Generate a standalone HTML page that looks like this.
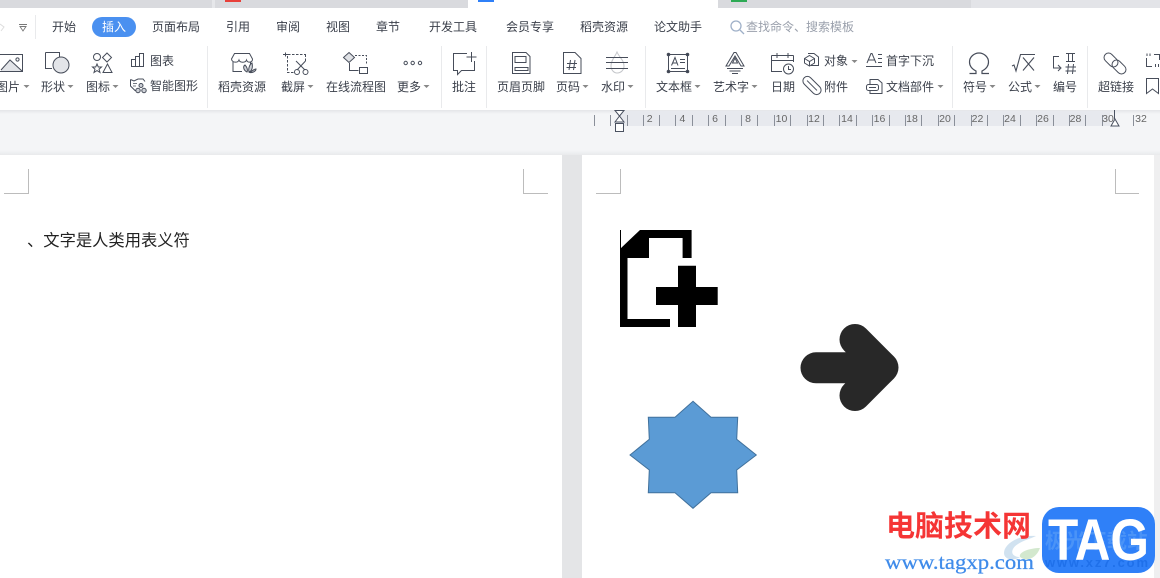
<!DOCTYPE html>
<html><head><meta charset="utf-8">
<style>
html,body{margin:0;padding:0}
body{position:relative;width:1160px;height:578px;overflow:hidden;background:#e4e5e7;font-family:"Liberation Sans","Noto Sans CJK SC",sans-serif}
.a{position:absolute}
.t{position:absolute;font-size:12px;line-height:16px;white-space:nowrap;color:#3a3f4a}
.m{top:19px}
.l{top:79px}
.u{top:53px}
</style></head><body>
<div class="a" style="left:0;top:0;width:1160px;height:8px;background:#d9dade"></div>
<div class="a" style="left:212px;top:0;width:3px;height:8px;background:#e6e7ea"></div>
<div class="a" style="left:971px;top:0;width:189px;height:8px;background:#e3e4e8"></div>
<div class="a" style="left:468px;top:0;width:250px;height:8px;background:#fff"></div>
<div class="a" style="left:225px;top:0;width:16px;height:2px;background:#e8403a"></div>
<div class="a" style="left:478px;top:0;width:16px;height:2px;background:#2f80f8"></div>
<div class="a" style="left:731px;top:0;width:16px;height:2px;background:#2eaa55"></div>
<div class="a" style="left:0;top:8px;width:1160px;height:102px;background:#fff"></div>
<div class="a" style="left:0;top:110px;width:1160px;height:45px;background:#f4f5f7"></div>
<div class="a" style="left:0;top:110px;width:1160px;height:4px;background:linear-gradient(#e4e5e8,#f4f5f7)"></div>
<div class="a" style="left:0;top:150px;width:1160px;height:5px;background:linear-gradient(#f4f5f7,#e9eaec)"></div>
<div class="a" style="left:620px;top:111px;width:490px;height:15px;background:#e7e9ee"></div>
<div class="a" style="left:0;top:155px;width:562px;height:423px;background:#fff"></div>
<div class="a" style="left:582px;top:155px;width:572px;height:423px;background:#fff"></div>
<div class="a" style="left:1154px;top:155px;width:6px;height:423px;background:#efeff0"></div>
<div class="a" style="left:92px;top:17px;width:44px;height:20px;border-radius:10px;background:#4a90f0"></div>
<span class="t m" style="left:52px">开始</span>
<span class="t m" style="left:102px;color:#fff">插入</span>
<span class="t m" style="left:152px">页面布局</span>
<span class="t m" style="left:226px">引用</span>
<span class="t m" style="left:276px">审阅</span>
<span class="t m" style="left:326px">视图</span>
<span class="t m" style="left:376px">章节</span>
<span class="t m" style="left:429px">开发工具</span>
<span class="t m" style="left:506px">会员专享</span>
<span class="t m" style="left:580px">稻壳资源</span>
<span class="t m" style="left:654px">论文助手</span>
<span class="t m" style="left:746px;color:#9aa0ac">查找命令、搜索模板</span>
<span class="t l" style="left:-4px">图片</span>
<span class="t l" style="left:41px">形状</span>
<span class="t l" style="left:86px">图标</span>
<span class="t u" style="left:150px">图表</span>
<span class="t" style="left:150px;top:78px">智能图形</span>
<span class="t l" style="left:218px">稻壳资源</span>
<span class="t l" style="left:281px">截屏</span>
<span class="t l" style="left:326px">在线流程图</span>
<span class="t l" style="left:397px">更多</span>
<span class="t l" style="left:452px">批注</span>
<span class="t l" style="left:497px">页眉页脚</span>
<span class="t l" style="left:556px">页码</span>
<span class="t l" style="left:601px">水印</span>
<span class="t l" style="left:656px">文本框</span>
<span class="t l" style="left:713px">艺术字</span>
<span class="t l" style="left:771px">日期</span>
<span class="t u" style="left:824px">对象</span>
<span class="t l" style="left:824px">附件</span>
<span class="t u" style="left:886px">首字下沉</span>
<span class="t l" style="left:886px">文档部件</span>
<span class="t l" style="left:963px">符号</span>
<span class="t l" style="left:1008px">公式</span>
<span class="t l" style="left:1053px">编号</span>
<span class="t l" style="left:1098px">超链接</span>

<svg class="a" style="left:0;top:0" width="1160" height="578" viewBox="0 0 1160 578">
<g stroke="#e9eaec" fill="none">
<path d="M35.5 15V39M207.5 46V108M441.5 46V108M486.5 46V108M645.5 46V108M952.5 46V108M1087.5 46V108"/>
</g>
<path d="M19 24.500H27M20 26.500H26L23 31Z" stroke="#777" fill="none" stroke-width=".9"/>
<path d="M0 24L4 27L1 31" stroke="#ddd" fill="none"/>
<circle cx="736" cy="26" r="5" fill="none" stroke="#9fb0c8" stroke-width="1.300"/><path d="M740 30L744 34" stroke="#9fb0c8" stroke-width="1.300"/>
<g fill="#888">
<path d="M23.500 85h6l-3 3zM67.500 85h6l-3 3zM112.500 85h6l-3 3zM307.500 85h6l-3 3zM423.500 85h6l-3 3zM582.500 85h6l-3 3zM627.500 85h6l-3 3zM694.500 85h6l-3 3zM751.500 85h6l-3 3zM851.500 60h6l-3 3zM937.500 85h6l-3 3zM989.500 85h6l-3 3zM1034.500 85h6l-3 3z"/>
</g>
<g fill="none" stroke="#474d5a" stroke-width="1">
<path d="M1 70L10 60L22 71H1Z" fill="#e2e4e8" stroke="none"/><path d="M0 54.500H22.500V71.500H0M1 70L10 60L22 71"/><circle cx="17.500" cy="59.500" r="1.600"/>
<path d="M45.500 52.500H59.500V59M52 68.500H45.500V52.500"/><circle cx="61" cy="65" r="8" fill="#e3e5e9"/>
<circle cx="97" cy="57" r="3.500"/><path d="M107 53L111.500 57.500L107 62L102.500 57.500Z"/><path d="M97 64L98.300 67H101.500L99 69.200L100 72.500L97 70.600L94 72.500L95 69.200L92.500 67H95.700Z"/><path d="M107.500 64L112 72.500H103Z"/>
<path d="M131.500 59.500H135.500V66.500H131.500ZM135.500 56.500H139.500V66.500H135.500ZM139.500 53.500H143.500V66.500H139.500Z"/>
<path d="M130.500 79.500L134 81L138 79L143 79L145 81.500M130.500 79.500V86L135 90.500H137"/><path d="M133 83.500H137M133 86H136" stroke-width=".8"/><circle cx="141" cy="85.500" r="2" fill="#cfd2d8"/><circle cx="138" cy="90.500" r="2.200" fill="#cfd2d8"/><circle cx="144" cy="90.500" r="2.200" fill="#cfd2d8"/>
<path d="M234.500 53.500H249.500L252.500 59C252.500 63 247.500 63 246.500 60C245.500 63 240 63 239 60C238 63 232 63 231.500 59Z"/><path d="M233 62V71.500H242M250.500 62V65"/><path d="M247 72C243 70 243 66 245 65C247 67 248 70 247 72ZM249 72C248 68 250 64 252 63C253 67 252 71 249 72ZM250 72.500C252 71 254 69 256 69C256 71 253 73 250 72.500Z" fill="#cfd2d8"/>
<path d="M288 54.500H306M287.500 56V72.500H295M305.500 54.500V62" stroke-dasharray="2.500 1.500"/><path d="M285.500 52.500V56.500M283 54.500H288"/><path d="M296 61L305 70M305.500 61L297 70"/><circle cx="297" cy="72" r="2.500"/><circle cx="305.500" cy="72" r="2.500"/>
<path d="M349 52.500L354.500 57.500L349 62.500L343.500 57.500Z" fill="#dfe1e5"/><path d="M355 55.500H366.500V65" stroke-dasharray="2 1.500"/><path d="M349.500 63V70.500H358.500"/><rect x="359.500" y="67.500" width="8" height="6"/>
<circle cx="405.700" cy="63" r="1.700"/><circle cx="412.700" cy="63" r="1.700"/><circle cx="420" cy="63" r="1.700"/>
<path d="M467 53.500H453.500V70.500H457.500V74.500L461.500 70.500H474.500V61"/><path d="M471.500 52V62M466.500 57H476.500"/>
<path d="M512.500 52.500H526L530 56.500V73.500H512.500Z"/><path d="M515 56.500H526V62.500H515ZM515 67.500H528V70.500H515Z"/>
<path d="M563.500 52.500H575L581 58.500V73.500H563.500Z"/><path d="M570.500 60L569 70M575 60L573.500 70M567 63.500H577M566.500 67.500H576"/>
<path d="M617 52C615 57 611 60 611 66C611 70 614 73 617 73C621 73 624 70 624 66C624 60 619 57 617 52Z" stroke="#c4c6ca"/><path d="M606 57.500H628M606 62.500H628M606 68.500H628"/>
<rect x="668.500" y="54.500" width="19" height="17"/><circle cx="668.500" cy="54.500" r="1.300" fill="#3d4350"/><circle cx="687.500" cy="54.500" r="1.300" fill="#3d4350"/><circle cx="668.500" cy="71.500" r="1.300" fill="#3d4350"/><circle cx="687.500" cy="71.500" r="1.300" fill="#3d4350"/><path d="M671.500 65.500L675 57.500L678 65.500M672.500 63H677M680 59.500H685M680 62.500H685M671 68.500H685"/>
<path d="M726 66L734 52.500H736L744 66H741L735 56L729 66Z"/><path d="M732.500 63L735 58L737.500 63ZM727 68.500H743M729.500 71H740.500M732 73.500H738"/>
<path d="M771.500 55.500H793.500M771.500 55.500V71.500H782M793.500 55.500V62M771.500 60.500H793.500M777 53V58M788 53V58"/><circle cx="788.500" cy="69" r="5" fill="#fff"/><path d="M788.500 66V69.500H791"/>
<path d="M808 53.500H814L818.500 57V65.500H811"/><path d="M809.500 55.500L814.500 58.500V63L809.500 66L804.500 63V58.500ZM804.500 58.500L809.500 61.500L814.500 58.500M809.500 61.500V66"/>
<g transform="rotate(45 812 85.500)"><rect x="801" y="81" width="22" height="9" rx="4.500"/><path d="M805 85.500H819"/></g>
<path d="M867 63L871 53.500H872L876 63M868.500 60H874.500M866 66.500H882M878 54.500H882M878 58.500H882M878 62.500H882"/>
<path d="M870 84V79.500H878L882 83V93.500H870V91"/><rect x="866.500" y="84.500" width="12" height="6" rx="2" fill="#fff"/><path d="M869 87.500H876"/>
<path d="M969.500 73.500H976V71C972 69 969.500 66 969.500 62C969.500 57 974 53 979 53C984 53 988.500 57 988.500 62C988.500 66 986 69 982 71V73.500H989" stroke-width="1.200"/>
<path d="M1012 66L1014 65L1016 71L1020.500 54.500H1035M1023 57.500L1034 70.500M1034 57.500L1023 70.500" stroke-width="1.100"/>
<path d="M1059 56.500H1053.500V68H1060M1058 65L1061 68L1058 71"/><path d="M1066 53.500H1075M1066 61.500H1075M1068.500 54V61M1072.500 54V61"/><path d="M1068.500 64L1067.500 74M1073.500 64L1072.500 74M1065.500 67H1076M1065.500 71H1076"/>
<g transform="rotate(45 1111 60)"><rect x="1103" y="55.500" width="16" height="9" rx="4.500"/></g>
<g transform="rotate(45 1119 67)"><rect x="1111" y="62.500" width="16" height="9" rx="4.500"/></g>
<path d="M1146.500 58V66.500H1152M1147 53.500V56M1150 53.500V56M1154 54.500H1159.500V60M1155.500 64V67M1158.500 64V67"/>
<path d="M1146.500 78.500H1158.500V93.500L1152.500 89L1146.500 93.500Z"/>
</g>

<path stroke="#8a8f99" fill="none" d="M594.500 115V126M610.500 115V126M627.500 115V126M643.500 115V126M659.500 115V126M675.500 115V126M692.500 115V126M708.500 115V126M725.500 115V126M741.500 115V126M757.500 115V126M774.500 115V126M790.500 115V126M807.500 115V126M823.500 115V126M839.500 115V126M856.500 115V126M872.500 115V126M889.500 115V126M905.500 115V126M921.500 115V126M938.500 115V126M954.500 115V126M971.500 115V126M987.500 115V126M1003.500 115V126M1020.500 115V126M1036.500 115V126M1053.500 115V126M1069.500 115V126M1085.500 115V126M1102.500 115V126M1133.500 115V126"/>
<g font-family="Liberation Sans, sans-serif" font-size="10.500" fill="#666" text-anchor="middle">
<text x="649.700" y="122">2</text><text x="682.400" y="122">4</text><text x="715" y="122">6</text><text x="748" y="122">8</text>
<text x="781.500" y="122">10</text><text x="814" y="122">12</text><text x="847" y="122">14</text><text x="879.500" y="122">16</text>
<text x="912" y="122">18</text><text x="945" y="122">20</text><text x="977.500" y="122">22</text><text x="1010" y="122">24</text>
<text x="1043" y="122">26</text><text x="1075.500" y="122">28</text><text x="1108" y="122">30</text><text x="1141" y="122">32</text>
</g>
<path d="M615 110.500H624L619.500 116L624 122H615L619.500 116Z" fill="#fff" stroke="#4a5160"/>
<rect x="615.500" y="123.500" width="8" height="8" fill="#fff" stroke="#4a5160"/>
<path d="M1114.500 110V119" stroke="#4a5160"/><path d="M1115 119L1119 126H1111Z" fill="#fff" stroke="#4a5160"/>

<path stroke="#bcbcbc" fill="none" d="M28.500 169V193.500H4M523.500 169V193.500H548M620.500 169V193.500H596M1115.500 169V193.500H1139"/>

<path fill="#000" d="M640 230H691.600V258H682.600V238H649V258H627.500V319H670V327H620V249Z"/>
<path fill="#000" d="M678 265.700H696V287H717.700V305H696V327H678V305H656V287H678Z"/>
<path d="M620.500 230V249" stroke="#000"/>
<g fill="none" stroke="#282828" stroke-width="31" stroke-linecap="round" stroke-linejoin="round">
<path d="M816 367.800H878M855 339.500L883 367.500L855 395.500"/>
</g>
<path fill="#5b9bd5" stroke="#41719c" d="M693 401.300L711 417.300L737.700 417.300L736.700 439.300L756.300 455L736.700 470L737.700 492.700L711 492.700L693 508.300L675 492.700L648.300 492.700L649.300 470L630 455L649.300 439.300L648.300 417.300L675 417.300Z"/>
<path d="M1036 536C1016 535 1004 545 1004 553C1004 560 1014 561 1020 557C1010 557 1010 549 1018 544C1024 540 1030 539 1036 536Z" fill="#c6dbec" opacity=".8"/>
<path d="M1040 548C1030 548 1018 552 1020 557C1026 562 1036 559 1040 548Z" fill="#c8e2c2" opacity=".8"/>
<rect x="1042" y="507" width="113" height="66" rx="17" fill="#2f80f8"/>
<text x="1045" y="548" font-size="20.500" fill="#4a93f7" font-family="Noto Sans CJK SC, sans-serif" font-weight="700">极光下载站</text>
<text x="1045" y="567" font-size="13" fill="#1f70ea" font-family="Liberation Sans, sans-serif" font-weight="700" textLength="103">www.xz7.com</text>
<text x="1048" y="560" font-size="58" font-weight="700" fill="#fff" font-family="Liberation Sans, sans-serif" textLength="101" lengthAdjust="spacingAndGlyphs">TAG</text>
<text x="885" y="569" font-size="21" fill="#3f8bea" stroke="#3f8bea" stroke-width=".25" font-family="Liberation Serif, serif" textLength="149" lengthAdjust="spacingAndGlyphs">www.tagxp.com</text>
</svg>
<span class="t" style="left:27px;top:230px;font-size:16.300px;line-height:22px;color:#222;font-family:'Liberation Sans','WenQuanYi Zen Hei',sans-serif">、文字是人类用表义符</span>
<span class="t" style="left:886px;top:509px;font-size:29px;line-height:36px;font-weight:700;color:#f53535;font-family:'Liberation Sans','Noto Sans CJK SC',sans-serif">电脑技术网</span>
</body></html>
